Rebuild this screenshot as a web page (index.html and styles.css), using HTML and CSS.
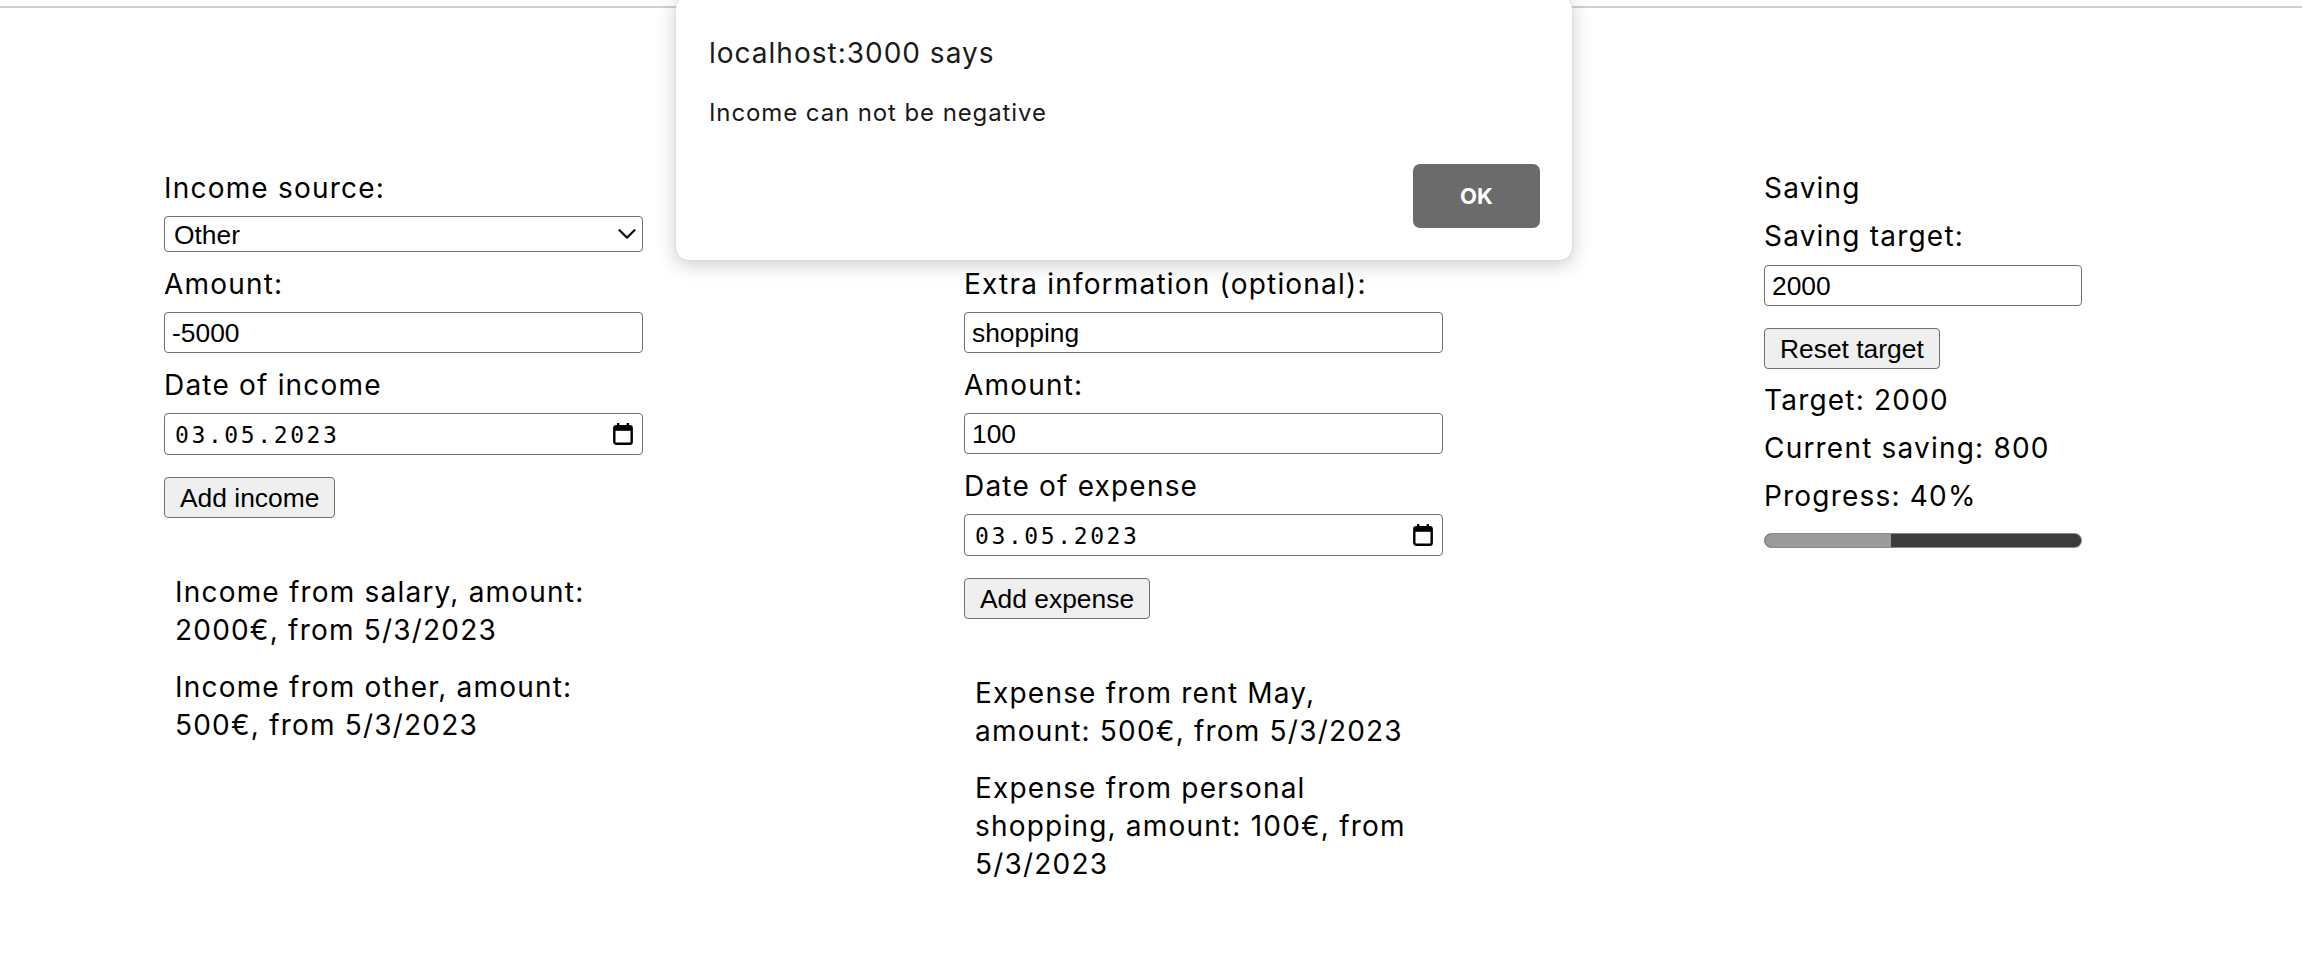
FILE: index.html
```html
<!DOCTYPE html>
<html lang="en">
<head>
<meta charset="utf-8">
<title>Budget</title>
<link rel="stylesheet" href="styles.css">
</head>
<body>
<div class="topbar"></div>
<main class="app">
  <section class="col">
    <form class="form">
      <label class="label" for="income-source">Income source:</label>
      <div class="select-wrap">
        <select id="income-source" class="control select"><option>Other</option></select>
        <svg class="chevron" width="18" height="10" viewBox="0 0 18 10"><path d="M1.5 1.2 L9 8.6 L16.5 1.2" fill="none" stroke="#111" stroke-width="2.2" stroke-linecap="round" stroke-linejoin="round"/></svg>
      </div>
      <label class="label" for="income-amount">Amount:</label>
      <input id="income-amount" class="control input" type="text" value="-5000">
      <label class="label">Date of income</label>
      <div class="control date">
        <span class="date-text">03.05.2023</span>
        <svg class="cal" width="20" height="22" viewBox="0 0 20 22"><rect x="4" y="0" width="2.4" height="4" fill="#000"/><rect x="13.6" y="0" width="2.4" height="4" fill="#000"/><rect x="1.3" y="3.3" width="17.4" height="17.4" rx="2" fill="none" stroke="#000" stroke-width="2.4"/><rect x="1.3" y="3.3" width="17.4" height="4.5" fill="#000"/></svg>
      </div>
      <button class="btn" type="button">Add income</button>
    </form>
    <ul class="entries">
      <li>Income from salary, amount: 2000€, from 5/3/2023</li>
      <li>Income from other, amount: 500€, from 5/3/2023</li>
    </ul>
  </section>

  <section class="col">
    <form class="form">
      <label class="label" for="expense-source">Expense:</label>
      <div class="select-wrap select-narrow">
        <select id="expense-source" class="control select"><option>Personal</option></select>
      </div>
      <label class="label" for="expense-extra">Extra information (optional):</label>
      <input id="expense-extra" class="control input" type="text" value="shopping">
      <label class="label" for="expense-amount">Amount:</label>
      <input id="expense-amount" class="control input" type="text" value="100">
      <label class="label">Date of expense</label>
      <div class="control date">
        <span class="date-text">03.05.2023</span>
        <svg class="cal" width="20" height="22" viewBox="0 0 20 22"><rect x="4" y="0" width="2.4" height="4" fill="#000"/><rect x="13.6" y="0" width="2.4" height="4" fill="#000"/><rect x="1.3" y="3.3" width="17.4" height="17.4" rx="2" fill="none" stroke="#000" stroke-width="2.4"/><rect x="1.3" y="3.3" width="17.4" height="4.5" fill="#000"/></svg>
      </div>
      <button class="btn" type="button">Add expense</button>
    </form>
    <ul class="entries">
      <li>Expense from rent May, amount: 500€, from 5/3/2023</li>
      <li>Expense from personal shopping, amount: 100€, from 5/3/2023</li>
    </ul>
  </section>

  <section class="col saving">
    <p class="heading">Saving</p>
    <label class="label label-saving" for="saving-target">Saving target:</label>
    <input id="saving-target" class="control input input-short" type="text" value="2000">
    <button class="btn btn-reset" type="button">Reset target</button>
    <p class="stat">Target: 2000</p>
    <p class="stat">Current saving: 800</p>
    <p class="stat">Progress: 40%</p>
    <div class="progress"><div class="progress-fill" style="width: 40%"></div></div>
  </section>
</main>

<div class="dialog" role="alertdialog">
  <p class="dialog-title">localhost:3000 says</p>
  <p class="dialog-msg">Income can not be negative</p>
  <button class="dialog-ok" type="button">OK</button>
</div>
</body>
</html>
```

FILE: styles.css
```css
* { box-sizing: border-box; }

html, body {
  margin: 0;
  padding: 0;
  background: #fff;
  color: #000;
  font-family: Inter, "Noto Sans", sans-serif;
  font-size: 28px;
  line-height: 38px;
  letter-spacing: 1.2px;
}

.topbar {
  height: 8px;
  border-bottom: 2px solid #cfcfcf;
}

.app {
  display: grid;
  grid-template-columns: 800px 800px 1fr;
  padding-left: 164px;
  padding-top: 161px;
}

.col {
  display: flex;
  flex-direction: column;
  align-items: flex-start;
}

.form {
  display: flex;
  flex-direction: column;
  align-items: flex-start;
  margin: 0;
}

.label {
  display: block;
  margin-bottom: 9px;
}

.control {
  font-family: "Liberation Sans", Arial, sans-serif;
  font-size: 26.4px;
  letter-spacing: normal;
  color: #000;
  background: #fff;
  border: 1.6px solid #707070;
  border-radius: 4px;
  margin: 0 0 13px 0;
}

.select-wrap {
  position: relative;
  width: 479px;
  margin-bottom: 13px;
}

.select-narrow { width: 200px; }

.select {
  appearance: none;
  -webkit-appearance: none;
  display: block;
  width: 100%;
  height: 36px;
  margin: 0;
  padding: 2px 0 0 9px;
  line-height: 31px;
}

.chevron {
  position: absolute;
  right: 7px;
  top: 13px;
}

.input {
  display: block;
  width: 479px;
  height: 41px;
  padding: 2px 7px 0 7px;
  outline: none;
}

.input-short { width: 318px; margin-bottom: 22px; }

.date {
  display: flex;
  align-items: center;
  justify-content: space-between;
  width: 479px;
  height: 42px;
  padding: 0 9px 0 10px;
  margin-bottom: 22px;
}

.date-text {
  font-family: "DejaVu Sans Mono", "Liberation Mono", monospace;
  font-size: 23px;
  letter-spacing: 2.6px;
  line-height: 1;
  padding-top: 3px;
}

.cal { display: block; }

.btn {
  font-family: "Liberation Sans", Arial, sans-serif;
  font-size: 26.4px;
  letter-spacing: normal;
  color: #000;
  height: 41px;
  padding: 2px 15px 0 15px;
  background: #efefef;
  border: 1.6px solid #707070;
  border-radius: 4px;
  margin: 0;
  line-height: 1;
}

.entries {
  list-style: none;
  margin: 55px 0 0 0;
  padding: 0 18px 0 11px;
  width: 479px;
}

.entries li {
  margin-bottom: 19px;
}

.saving .heading {
  margin: 0 0 10px 0;
}

.label-saving { margin-bottom: 10px; }

.btn-reset { margin-bottom: 12px; }

.stat {
  margin: 0 0 10px 0;
}

.progress {
  width: 318px;
  height: 15px;
  margin-top: 8px;
  background: #3c3c3c;
  border: 1.5px solid #8a8a8a;
  border-radius: 8px;
  overflow: hidden;
}

.progress-fill {
  height: 100%;
  background: #9a9a9a;
}

.dialog {
  position: absolute;
  left: 676px;
  top: -4px;
  width: 896px;
  height: 264px;
  background: #fff;
  border-radius: 12px;
  box-shadow: 0 4px 20px rgba(0, 0, 0, 0.22), 0 0 1px rgba(0, 0, 0, 0.25);
  padding: 40px 32px 32px 33px;
  display: flex;
  flex-direction: column;
  align-items: flex-start;
}

.dialog-title {
  margin: 0;
  font-size: 28px;
  line-height: 34px;
  letter-spacing: 1px;
  color: #1a1a1a;
}

.dialog-msg {
  margin: 28px 0 0 0;
  font-size: 24px;
  line-height: 30px;
  letter-spacing: 0.9px;
  color: #1a1a1a;
}

.dialog-ok {
  align-self: flex-end;
  margin-top: 36px;
  width: 127px;
  height: 64px;
  border: none;
  border-radius: 7px;
  background: #6b6b6b;
  color: #fff;
  font-family: Inter, "Noto Sans", sans-serif;
  font-weight: 700;
  font-size: 22px;
  letter-spacing: normal;
}
```
